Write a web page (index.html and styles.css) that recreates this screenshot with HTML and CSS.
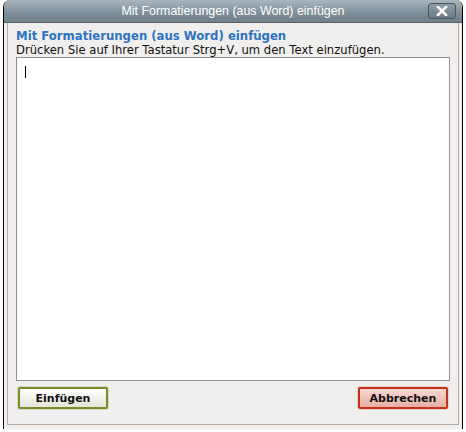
FILE: index.html
```html
<!DOCTYPE html>
<html lang="de">
<head>
    <meta charset="UTF-8">
    <title>Mit Formatierungen (aus Word) einfügen</title>
    <link rel="stylesheet" href="styles.css">
</head>
<body>
    <div class="dialog">
        <div class="titlebar">
            <span class="title">Mit Formatierungen (aus Word) einfügen</span>
            <button class="close" title="Schließen">
                <svg width="12" height="10" viewBox="0 0 12 10">
                    <path d="M2 1 L10 9 M10 1 L2 9" stroke="#fff" stroke-width="2.6" stroke-linecap="square"/>
                </svg>
            </button>
        </div>
        <div class="panel">
            <h2 class="heading">Mit Formatierungen (aus Word) einfügen</h2>
            <p class="hint">Drücken Sie auf Ihrer Tastatur Strg+V, um den Text einzufügen.</p>
            <div class="editor"><span class="caret"></span></div>
            <div class="actions">
                <button class="btn ok">Einfügen</button>
                <button class="btn cancel">Abbrechen</button>
            </div>
        </div>
    </div>
</body>
</html>
```
FILE: styles.css
```css
body {
    margin: 0;
    background-color: #fff;
    font-family: "DejaVu Sans", Verdana, sans-serif;
}

.dialog {
    width: 458px;
    height: 429px;
    margin-left: 3px;
    border-left: 1px solid #000;
    border-right: 1px solid #000;
    border-radius: 7px 7px 0 0;
    background-color: #f0efed;
    display: flex;
    flex-direction: column;
    overflow: hidden;
}

.titlebar {
    height: 22px;
    flex-shrink: 0;
    display: flex;
    align-items: center;
    justify-content: center;
    position: relative;
    background: linear-gradient(#a9b6be, #7d8e99 60%, #6f808b);
    border-bottom: 1px solid #56646d;
}

.title {
    color: #fff;
    font-family: "Liberation Sans", Arial, sans-serif;
    font-size: 12.4px;
}

.close {
    position: absolute;
    right: 6px;
    top: 3px;
    width: 28px;
    height: 16px;
    padding: 0;
    border: 1px solid #4b5861;
    border-radius: 3px;
    background: linear-gradient(#8e9da6, #6a7b86);
    display: flex;
    align-items: center;
    justify-content: center;
}

.panel {
    flex: 1;
    margin: 0 3px 4px 3px;
    padding: 5px 8px 15px 8px;
    border: 1px solid #b7aca4;
    border-top: none;
    display: flex;
    flex-direction: column;
}

.heading {
    margin: 0;
    font-size: 11.7px;
    font-weight: bold;
    color: #2e72c2;
    line-height: 16px;
}

.hint {
    margin: 0;
    font-size: 11.6px;
    color: #111;
    line-height: 13px;
}

.editor {
    flex: 1;
    background-color: #fff;
    border: 1px solid #8f8f8f;
    padding: 8px;
}

.caret {
    display: block;
    width: 1px;
    height: 12px;
    background-color: #000;
}

.actions {
    display: flex;
    justify-content: space-between;
    padding: 6px 2px 0 2px;
}

.btn {
    width: 90px;
    height: 22px;
    border-radius: 2px;
    font-family: "DejaVu Sans", Verdana, sans-serif;
    font-size: 11px;
    font-weight: bold;
    color: #111;
    padding: 0;
}

.ok {
    border: 2px solid #7e8c28;
    background: linear-gradient(#ffffff, #f1f1ec 50%, #e4e4dc);
    box-shadow: 0 0 0 1px #d5d8c6;
}

.cancel {
    border: 2px solid #c2341a;
    background: linear-gradient(#f8d8d2, #efc3bb 50%, #e6b0a6);
    box-shadow: 0 0 0 1px #e6cfca;
}
```
